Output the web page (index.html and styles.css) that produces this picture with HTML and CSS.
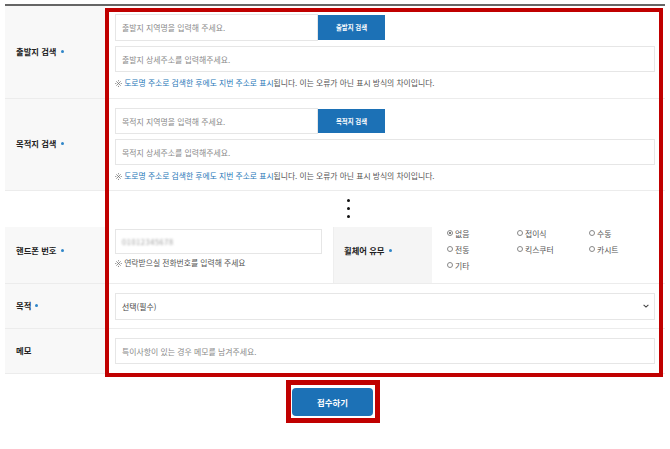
FILE: index.html
```html
<!DOCTYPE html>
<html lang="ko">
<head>
<meta charset="utf-8">
<link rel="stylesheet" href="styles.css">
</head>
<body>
<div class="page">
  <div class="topline"></div>
  <div class="form">
    <div class="row row-a">
      <div class="label">출발지 검색<span class="req"></span></div>
      <div class="cell">
        <div class="search">
          <div class="input short">출발지 지역명을 입력해 주세요.</div>
          <div class="sbtn">출발지 검색</div>
        </div>
        <div class="input">출발지 상세주소를 입력해주세요.</div>
        <div class="note"><svg class="mark" width="7" height="7" viewBox="0 0 7 7"><path d="M1.3 1.3 L5.7 5.7 M5.7 1.3 L1.3 5.7" stroke="#666" stroke-width="0.7"/><circle cx="3.5" cy="0.8" r="0.55" fill="#666"/><circle cx="3.5" cy="6.2" r="0.55" fill="#666"/><circle cx="0.8" cy="3.5" r="0.55" fill="#666"/><circle cx="6.2" cy="3.5" r="0.55" fill="#666"/></svg> <span class="blue">도로명 주소로 검색한 후에도 지번 주소로 표시</span>됩니다. 이는 오류가 아닌 표시 방식의 차이입니다.</div>
      </div>
    </div>
    <div class="row row-b">
      <div class="label">목적지 검색<span class="req"></span></div>
      <div class="cell">
        <div class="search">
          <div class="input short">목적지 지역명을 입력해 주세요.</div>
          <div class="sbtn">목적지 검색</div>
        </div>
        <div class="input">목적지 상세주소를 입력해주세요.</div>
        <div class="note"><svg class="mark" width="7" height="7" viewBox="0 0 7 7"><path d="M1.3 1.3 L5.7 5.7 M5.7 1.3 L1.3 5.7" stroke="#666" stroke-width="0.7"/><circle cx="3.5" cy="0.8" r="0.55" fill="#666"/><circle cx="3.5" cy="6.2" r="0.55" fill="#666"/><circle cx="0.8" cy="3.5" r="0.55" fill="#666"/><circle cx="6.2" cy="3.5" r="0.55" fill="#666"/></svg> <span class="blue">도로명 주소로 검색한 후에도 지번 주소로 표시</span>됩니다. 이는 오류가 아닌 표시 방식의 차이입니다.</div>
      </div>
    </div>
    <div class="gap">
      <div class="dots"><i></i><i></i><i></i></div>
    </div>
    <div class="row row-c">
      <div class="label">핸드폰 번호<span class="req"></span></div>
      <div class="cell phone">
        <div class="input pin"><span class="blur">01012345678</span></div>
        <div class="note gray"><svg class="mark" width="7" height="7" viewBox="0 0 7 7"><path d="M1.3 1.3 L5.7 5.7 M5.7 1.3 L1.3 5.7" stroke="#666" stroke-width="0.7"/><circle cx="3.5" cy="0.8" r="0.55" fill="#666"/><circle cx="3.5" cy="6.2" r="0.55" fill="#666"/><circle cx="0.8" cy="3.5" r="0.55" fill="#666"/><circle cx="6.2" cy="3.5" r="0.55" fill="#666"/></svg> 연락받으실 전화번호를 입력해 주세요</div>
      </div>
      <div class="label label2">휠체어 유무<span class="req"></span></div>
      <div class="radios">
        <div class="opt"><span class="rd on"></span>없음</div>
        <div class="opt"><span class="rd"></span>접이식</div>
        <div class="opt"><span class="rd"></span>수동</div>
        <div class="opt"><span class="rd"></span>전동</div>
        <div class="opt"><span class="rd"></span>킥스쿠터</div>
        <div class="opt"><span class="rd"></span>카시트</div>
        <div class="opt"><span class="rd"></span>기타</div>
      </div>
    </div>
    <div class="row row-d">
      <div class="label">목적<span class="req"></span></div>
      <div class="cell">
        <div class="input select"><span class="dark">선택(필수)</span>
          <svg class="chev" width="6" height="4" viewBox="0 0 6 4"><path d="M0.6 0.8 L3 3.1 L5.4 0.8" fill="none" stroke="#444" stroke-width="1.1"/></svg>
        </div>
      </div>
    </div>
    <div class="row row-e">
      <div class="label">메모</div>
      <div class="cell">
        <div class="input">특이사항이 있는 경우 메모를 남겨주세요.</div>
      </div>
    </div>
    <div class="redbox"></div>
  </div>
  <div class="submit-wrap">
    <div class="submit">접수하기<span class="redbox2"></span></div>
  </div>
</div>
</body>
</html>
```

FILE: styles.css
```css
* { box-sizing: border-box; }
html, body { margin: 0; padding: 0; background: #fff; }
body {
  font-family: "Noto Sans CJK KR", "Noto Sans", sans-serif;
  font-size: 7.8px;
  color: #333;
  width: 670px;
  height: 449px;
  overflow: hidden;
}
.page { padding: 0 5px; }
.topline { height: 2px; background: #666; margin-top: 4px; }
.form { position: relative; }
.row {
  display: grid;
  grid-template-columns: 100px 1fr;
  border-bottom: 1px solid #ececec;
}
.label {
  background: #f8f8f8;
  display: flex;
  align-items: center;
  padding-left: 11px;
  padding-bottom: 3px;
  font-weight: 700;
  font-size: 8.3px;
  color: #222;
}
.req {
  display: inline-block;
  width: 3px; height: 3px;
  border-radius: 50%;
  background: #2f86c8;
  margin-left: 4px;
  margin-top: 1px;
}
.cell { padding: 0 10px; display: flex; flex-direction: column; }
.row-a .cell { padding-top: 8px; padding-bottom: 9px; gap: 5px; }
.row-b .cell { padding-top: 9px; padding-bottom: 8px; gap: 5px; }
.search { display: flex; align-items: stretch; }
.input {
  height: 26px;
  border: 1px solid #e6e6e6;
  background: #fff;
  display: flex;
  align-items: center;
  padding-left: 6px;
  color: #8a8a8a;
  font-size: 7.9px;
}
.row-a .search .input { height: 27px; }
.short { width: 203px; }
.sbtn {
  width: 67px;
  background: #1c71b6;
  color: #fff;
  font-weight: 700;
  font-size: 6.4px;
  display: flex;
  align-items: center;
  justify-content: center;
  margin: 1px 0;
}
.note { height: 12px; line-height: 12px; color: #555; font-size: 7.8px; white-space: nowrap; }
.mark { vertical-align: -0.5px; }
.blue { color: #2777b8; }
.gap { height: 36px; position: relative; }
.dots {
  position: absolute; left: 342px; top: 8px;
  display: flex; flex-direction: column; gap: 5px;
}
.dots i { display: block; width: 3px; height: 3px; border-radius: 50%; background: #111; }
.row-c {
  grid-template-columns: 100px 228px 99px 1fr;
  height: 57px;
}
.row-c .label { padding-bottom: 10px; }
.phone { padding: 2px 11px 0 10px; }
.pin { height: 25px; }
.blur { color: #9a9a9a; filter: blur(1.2px); font-size: 7.4px; letter-spacing: 0.6px; }
.note.gray { margin-top: 3px; color: #555; }
.label2 { background: #f5f5f5; padding-left: 10px; border-left: 1px solid #eee; }
.radios {
  display: grid;
  grid-template-columns: 70px 72px 1fr;
  grid-auto-rows: 16px;
  padding: 0 0 0 15px;
  margin-top: -2px;
  align-content: start;
}
.opt { display: flex; align-items: center; color: #555; font-size: 7.8px; }
.rd {
  width: 6px; height: 6px; border-radius: 50%;
  border: 0.8px solid #888; margin-right: 2px; position: relative;
}
.rd.on::after {
  content: ""; position: absolute; left: 1px; top: 1px;
  width: 2.4px; height: 2.4px; border-radius: 50%; background: #555;
}
.row-d { height: 45px; }
.row-d .cell, .row-e .cell { justify-content: center; }
.row-d .input { height: 27px; }
.select { justify-content: space-between; padding-right: 5px; }
.dark { color: #444; }
.row-e { height: 45px; }
.redbox {
  position: absolute;
  left: 100px; top: 2px;
  width: 558px; height: 369px;
  border: 4.5px solid #c00000;
  pointer-events: none;
}
.submit-wrap { display: flex; justify-content: center; padding-top: 14px; padding-right: 5px; }
.submit {
  position: relative;
  width: 81px; height: 28px;
  background: #1c71b6;
  border-radius: 4px;
  color: #fff;
  font-weight: 700;
  font-size: 8.4px;
  display: flex; align-items: center; justify-content: center;
}
.redbox2 {
  position: absolute;
  left: -6px; right: -7px; top: -8px; bottom: -7px;
  border: 5px solid #c00000;
}
```
